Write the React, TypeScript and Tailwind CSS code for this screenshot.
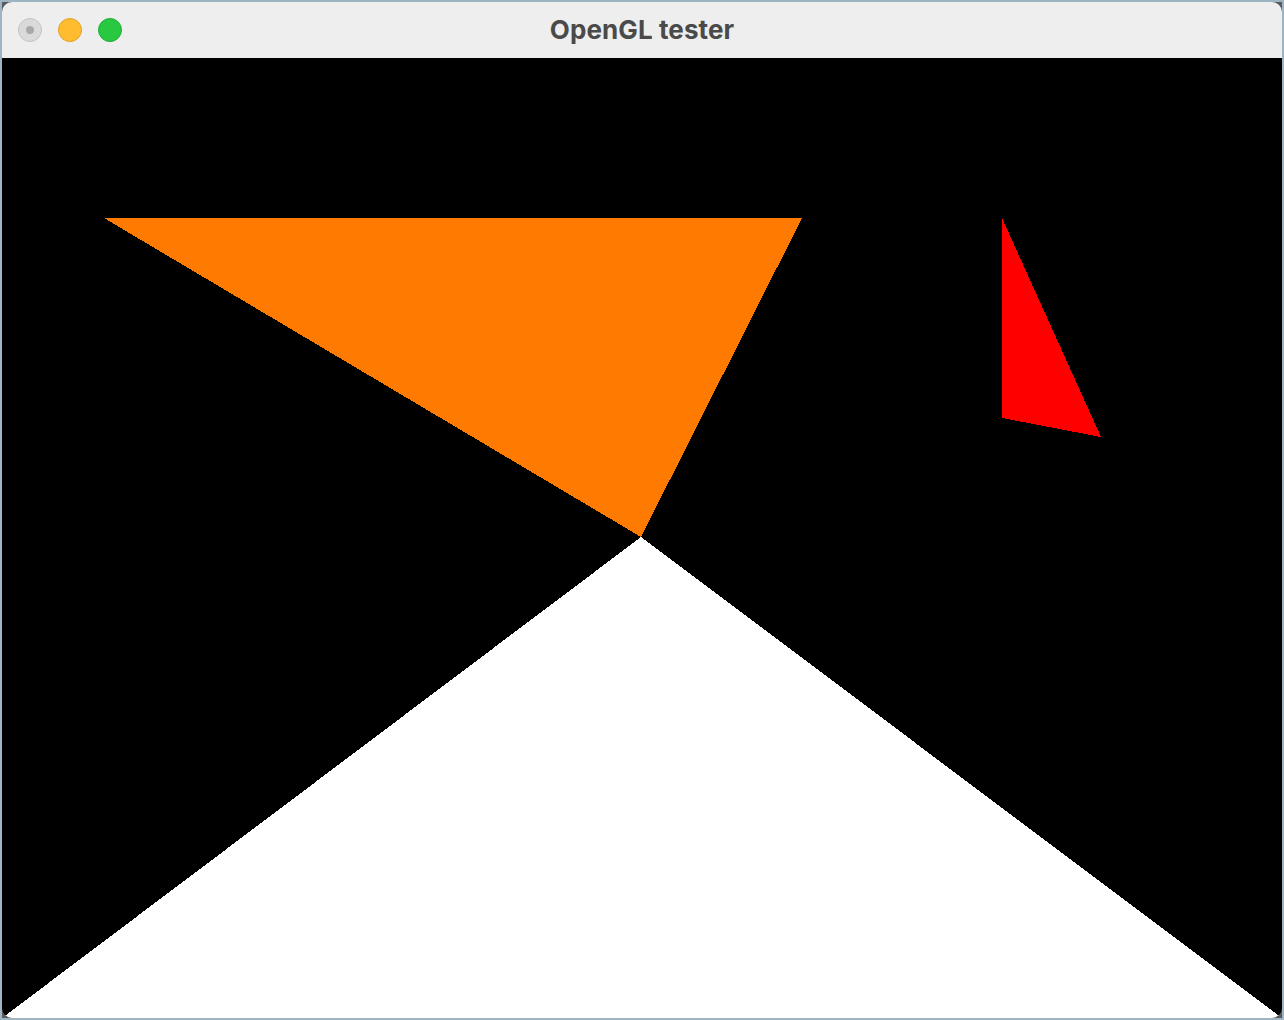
import React from "react";

export default function App() {
  return (
    <div className="w-[1284px] h-[1020px] bg-[#9db4c2] p-[2px] overflow-hidden">
      <div className="w-[1280px] h-[1016px] bg-[#5a5a5e] flex flex-col overflow-hidden">
        <div className="h-[56px] bg-[#eeeeee] rounded-t-[10px] relative flex items-center justify-center">
          <div className="absolute left-[16px] top-[16px] flex gap-[16px]">
            <div className="w-[24px] h-[24px] rounded-full bg-[#dadada] border border-[#c4c4c4] flex items-center justify-center">
              <div className="w-[8px] h-[8px] rounded-full bg-[#a9a9a9]" />
            </div>
            <div className="w-[24px] h-[24px] rounded-full bg-[#febc2e] border border-[#e1a228]" />
            <div className="w-[24px] h-[24px] rounded-full bg-[#28c840] border border-[#20ad36]" />
          </div>
          <div
            className="text-[26px] font-bold text-[#4a4a4a] leading-none mt-[-1px] tracking-[0.1px]"
            style={{ fontFamily: "Inter, 'Liberation Sans', sans-serif" }}
          >
            OpenGL tester
          </div>
        </div>
        <div className="w-[1280px] h-[960px] bg-black rounded-b-[10px] overflow-hidden">
          <svg width="1280" height="960" viewBox="0 0 1280 960" shapeRendering="crispEdges" className="block">
            <polygon points="102,160 800,160 639,479" fill="#ff7a00" />
            <polygon points="0,960 639,479 1280,960" fill="#ffffff" />
            <polygon points="1000,160 1000,360 1099,379" fill="#ff0000" />
          </svg>
        </div>
      </div>
    </div>
  );
}
